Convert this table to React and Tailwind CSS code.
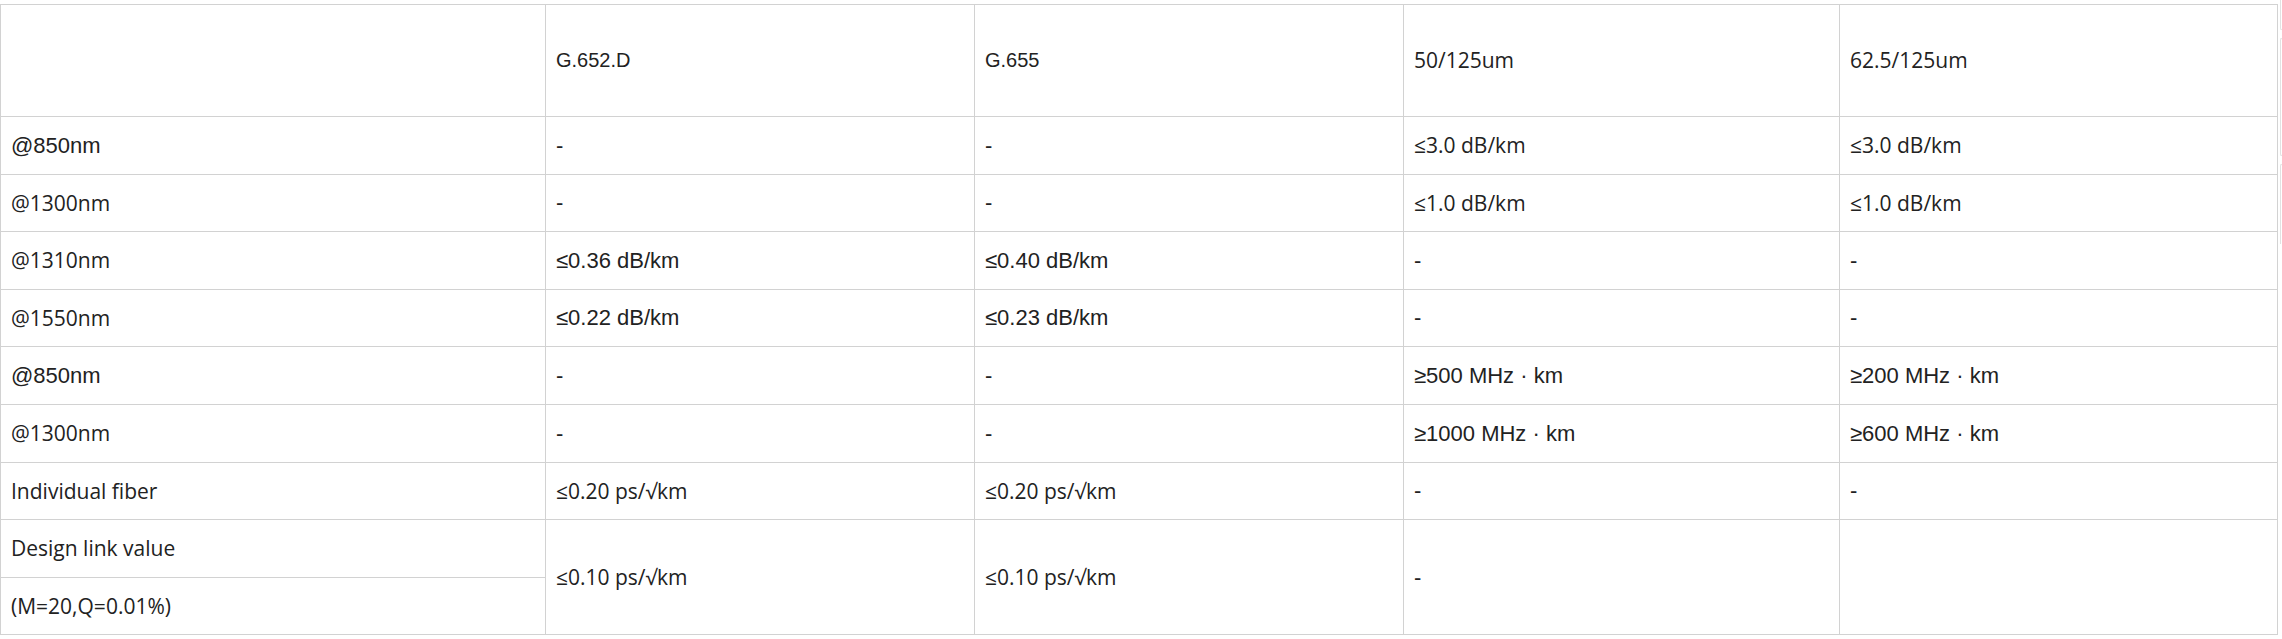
const A = "font-['Liberation_Sans',Arial,sans-serif] text-[22px]";
const P = "font-['Open_Sans',sans-serif] text-[21px]";

const rows = [
  [["@850nm", A], ["-", A], ["-", A], ["≤3.0 dB/km", P], ["≤3.0 dB/km", P]],
  [["@1300nm", P], ["-", A], ["-", A], ["≤1.0 dB/km", P], ["≤1.0 dB/km", P]],
  [["@1310nm", P], ["≤0.36 dB/km", A], ["≤0.40 dB/km", A], ["-", A], ["-", A]],
  [["@1550nm", P], ["≤0.22 dB/km", A], ["≤0.23 dB/km", A], ["-", A], ["-", A]],
  [["@850nm", A], ["-", A], ["-", A], ["≥500 MHz · km", A], ["≥200 MHz · km", A]],
  [["@1300nm", P], ["-", A], ["-", A], ["≥1000 MHz · km", A], ["≥600 MHz · km", A]],
  [["Individual fiber", P], ["≤0.20 ps/√km", P], ["≤0.20 ps/√km", P], ["-", A], ["-", A]],
];

const cell = "border border-[#d2d2d2] pl-[10px] pr-2 align-middle text-left font-normal leading-tight";
const head = "font-['Liberation_Sans',Arial,sans-serif] text-[20px]";

export default function App() {
  return (
    <div className="flex bg-white pt-[4px] text-[#222]">
      <table className="w-[2277px] table-fixed border-collapse">
        <colgroup>
          <col className="w-[545px]" />
          <col className="w-[429px]" />
          <col className="w-[429px]" />
          <col className="w-[436px]" />
          <col className="w-[438px]" />
        </colgroup>
        <thead>
          <tr className="h-[112px]">
            <th className={cell}></th>
            <th className={`${cell} ${head}`}>G.652.D</th>
            <th className={`${cell} ${head}`}>G.655</th>
            <th className={`${cell} ${P}`}>50/125um</th>
            <th className={`${cell} ${P}`}>62.5/125um</th>
          </tr>
        </thead>
        <tbody>
          {rows.map((r, i) => (
            <tr key={i} className="h-[57.6px]">
              {r.map(([t, f], j) => (
                <td key={j} className={`${cell} ${f}`}>
                  {t}
                </td>
              ))}
            </tr>
          ))}
          <tr className="h-[57.6px]">
            <td className={`${cell} ${P}`}>Design link value</td>
            <td rowSpan={2} className={`${cell} ${P}`}>≤0.10 ps/√km</td>
            <td rowSpan={2} className={`${cell} ${P}`}>≤0.10 ps/√km</td>
            <td rowSpan={2} className={`${cell} ${A}`}>-</td>
            <td rowSpan={2} className={cell}></td>
          </tr>
          <tr className="h-[57.6px]">
            <td className={`${cell} ${P}`}>(M=20,Q=0.01%)</td>
          </tr>
        </tbody>
      </table>
      <div className="-mt-[4px] ml-[2px] flex flex-1 flex-col gap-[8px]">
        <div className="h-[30px] rounded-bl-md border-b border-l border-[#e2e2e2]" />
        <div className="h-[118px] rounded-l-md border-y border-l border-[#e2e2e2]" />
        <div className="h-[80px] rounded-tl-md border-t border-l border-[#e2e2e2]" />
      </div>
    </div>
  );
}
